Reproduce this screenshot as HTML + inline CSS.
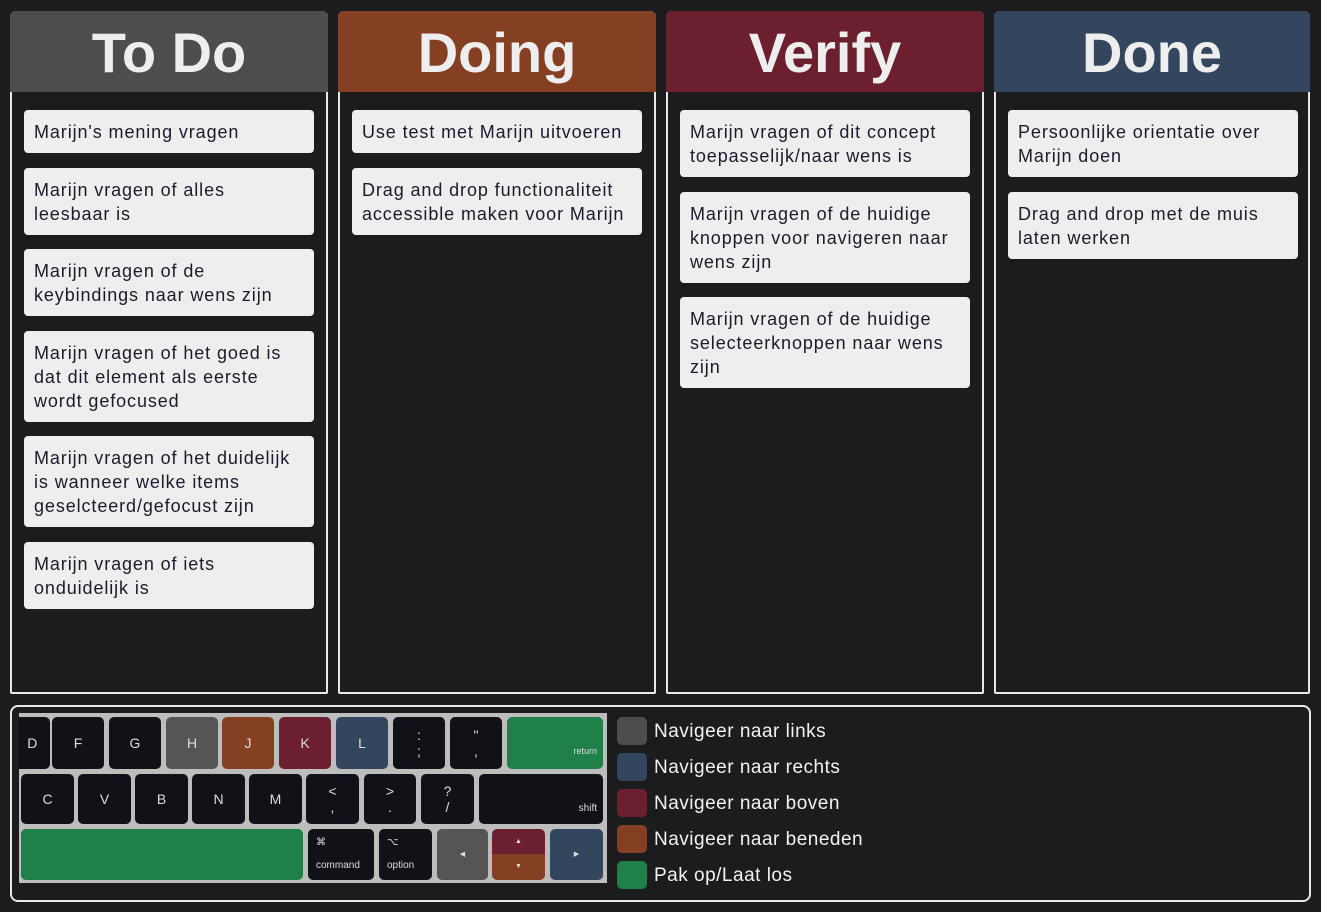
<!DOCTYPE html>
<html><head><meta charset="utf-8"><style>
*{box-sizing:border-box;margin:0;padding:0}
body{width:1321px;height:912px;background:#1c1c1e;font-family:"Liberation Sans",sans-serif;position:relative;overflow:hidden}
.col{position:absolute;top:11px;width:318px;height:683px;border:2px solid #e8e8e8;border-top:none;border-radius:6px 6px 2px 2px}
.hd{position:absolute;left:-2px;right:-2px;top:0;height:81px;border-radius:6px 6px 0 0;color:#eee;font-weight:bold;font-size:56px;text-align:center;line-height:84px}
.card{position:absolute;left:12px;width:290px;height:43px;background:#eee;border-radius:4px;padding:10px 10px;font-size:18px;line-height:24px;color:#1b1b2b;letter-spacing:0.9px;white-space:nowrap;overflow:hidden}
.h2{height:67px}.h3{height:91px}
.panel{position:absolute;left:10px;top:705px;width:1301px;height:197px;border:2px solid #e8e8e8;border-radius:8px}
.kb{position:absolute;left:19px;top:713px;width:588px;height:170px;background:#bdbdbd;overflow:hidden}
.k{position:absolute;background:#111217;border-radius:5px;color:#ddd;font-size:14px;display:flex;align-items:center;justify-content:center;text-align:center;line-height:16px}
.s{position:absolute;left:617px;width:30px;height:28px;border-radius:5px}
.t{position:absolute;left:654px;color:#f2f2f2;font-size:19px;line-height:28px;letter-spacing:0.5px}
</style></head><body>
<div class="col" style="left:10px"><div class="hd" style="background:#4d4d4d">To Do</div>
<div class="card" style="top:99px">Marijn's mening vragen</div>
<div class="card h2" style="top:157px">Marijn vragen of alles<br>leesbaar is</div>
<div class="card h2" style="top:238px">Marijn vragen of de<br>keybindings naar wens zijn</div>
<div class="card h3" style="top:320px">Marijn vragen of het goed is<br>dat dit element als eerste<br>wordt gefocused</div>
<div class="card h3" style="top:425px">Marijn vragen of het duidelijk<br>is wanneer welke items<br>geselcteerd/gefocust zijn</div>
<div class="card h2" style="top:531px">Marijn vragen of iets<br>onduidelijk is</div>
</div>
<div class="col" style="left:338px"><div class="hd" style="background:#853f22">Doing</div>
<div class="card" style="top:99px">Use test met Marijn uitvoeren</div>
<div class="card h2" style="top:157px">Drag and drop functionaliteit<br>accessible maken voor Marijn</div>
</div>
<div class="col" style="left:666px"><div class="hd" style="background:#6b1f2f">Verify</div>
<div class="card h2" style="top:99px">Marijn vragen of dit concept<br>toepasselijk/naar wens is</div>
<div class="card h3" style="top:181px">Marijn vragen of de huidige<br>knoppen voor navigeren naar<br>wens zijn</div>
<div class="card h3" style="top:286px">Marijn vragen of de huidige<br>selecteerknoppen naar wens<br>zijn</div>
</div>
<div class="col" style="left:994px;width:316px"><div class="hd" style="background:#34455e">Done</div>
<div class="card h2" style="top:99px">Persoonlijke orientatie over<br>Marijn doen</div>
<div class="card h2" style="top:181px">Drag and drop met de muis<br>laten werken</div>
</div>
<div class="panel"></div>
<div class="kb">
<div class="k" style="left:-20px;top:4px;width:51px;height:52px">&nbsp;&nbsp;&nbsp;&nbsp;D</div>
<div class="k" style="left:33px;top:4px;width:52px;height:52px">F</div>
<div class="k" style="left:90px;top:4px;width:52px;height:52px">G</div>
<div class="k" style="left:147px;top:4px;width:52px;height:52px;background:#555">H</div>
<div class="k" style="left:203px;top:4px;width:52px;height:52px;background:#853f22">J</div>
<div class="k" style="left:260px;top:4px;width:52px;height:52px;background:#6b1f2f">K</div>
<div class="k" style="left:317px;top:4px;width:52px;height:52px;background:#34455e">L</div>
<div class="k" style="left:374px;top:4px;width:52px;height:52px">:<br>;</div>
<div class="k" style="left:431px;top:4px;width:52px;height:52px">"<br>,</div>
<div class="k" style="left:488px;top:4px;width:96px;height:52px;background:#20804a;font-size:9px;justify-content:flex-end;align-items:flex-end;padding:0 6px 10px 0">return</div>
<div class="k" style="left:2px;top:61px;width:53px;height:50px">C</div>
<div class="k" style="left:59px;top:61px;width:53px;height:50px">V</div>
<div class="k" style="left:116px;top:61px;width:53px;height:50px">B</div>
<div class="k" style="left:173px;top:61px;width:53px;height:50px">N</div>
<div class="k" style="left:230px;top:61px;width:53px;height:50px">M</div>
<div class="k" style="left:287px;top:61px;width:53px;height:50px">&lt;<br>,</div>
<div class="k" style="left:345px;top:61px;width:52px;height:50px">&gt;<br>.</div>
<div class="k" style="left:402px;top:61px;width:53px;height:50px">?<br>/</div>
<div class="k" style="left:460px;top:61px;width:124px;height:50px;font-size:10px;justify-content:flex-end;align-items:flex-end;padding:0 6px 7px 0">shift</div>
<div class="k" style="left:2px;top:116px;width:282px;height:51px;background:#20804a"></div>
<div class="k" style="left:289px;top:116px;width:66px;height:51px;font-size:10px;flex-direction:column;align-items:flex-start;justify-content:space-between;padding:6px 8px">⌘<span>command</span></div>
<div class="k" style="left:360px;top:116px;width:53px;height:51px;font-size:10px;flex-direction:column;align-items:flex-start;justify-content:space-between;padding:6px 8px">⌥<span>option</span></div>
<div class="k" style="left:418px;top:116px;width:51px;height:51px;background:#555;font-size:7px">◀</div>
<div class="k" style="left:473px;top:116px;width:53px;height:25px;background:#6b1f2f;border-radius:5px 5px 0 0;font-size:7px">▲</div>
<div class="k" style="left:473px;top:141px;width:53px;height:26px;background:#853f22;border-radius:0 0 5px 5px;font-size:7px">▼</div>
<div class="k" style="left:531px;top:116px;width:53px;height:51px;background:#34455e;font-size:7px">▶</div>
</div>
<div class="s" style="top:717px;background:#4d4d4d"></div><div class="t" style="top:718px">Navigeer naar links</div>
<div class="s" style="top:753px;background:#34455e"></div><div class="t" style="top:754px">Navigeer naar rechts</div>
<div class="s" style="top:789px;background:#6b1f2f"></div><div class="t" style="top:790px">Navigeer naar boven</div>
<div class="s" style="top:825px;background:#853f22"></div><div class="t" style="top:826px">Navigeer naar beneden</div>
<div class="s" style="top:861px;background:#20804a"></div><div class="t" style="top:862px">Pak op/Laat los</div>
</body></html>
